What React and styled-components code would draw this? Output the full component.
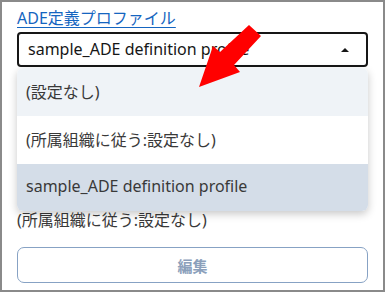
import React, { useState } from 'react';
import styled, { createGlobalStyle } from 'styled-components';

const GlobalStyle = createGlobalStyle`
  html, body {
    margin: 0;
    padding: 0;
    background: #ffffff;
  }
  body {
    font-family: "Noto Sans", "Noto Sans CJK JP", sans-serif;
  }
`;

// Outer frame of the panel
const Frame = styled.div`
  position: relative;
  width: 385px;
  height: 292px;
  box-sizing: border-box;
  border: 2px solid #8a8a8a;
  padding: 5px 15px 0 15px;
  background: #fff;
  display: flex;
  flex-direction: column;
`;

const FieldLabel = styled.a`
  align-self: flex-start;
  font-size: 16px;
  line-height: 22px;
  color: #1565c0;
  text-decoration: underline;
  text-underline-offset: 3px;
  cursor: pointer;
`;

const SelectWrap = styled.div`
  position: relative;
  margin-top: 3px;
`;

const SelectBox = styled.div`
  height: 35px;
  box-sizing: border-box;
  border: 2px solid #161616;
  border-radius: 4px;
  display: flex;
  align-items: center;
  justify-content: space-between;
  padding: 0 17px 1px 9px;
  font-size: 16px;
  color: #161616;
  background: #fff;
`;

const Caret = styled.span`
  width: 0;
  height: 0;
  border-left: 4.5px solid transparent;
  border-right: 4.5px solid transparent;
  border-bottom: 4.5px solid #161616;
  margin-top: 2px;
`;

const Menu = styled.ul`
  position: absolute;
  top: 100%;
  left: 0;
  right: 0;
  margin: 1px 0 0;
  padding: 0;
  list-style: none;
  background: #fff;
  border-radius: 6px;
  overflow: hidden;
  box-shadow: 0 3px 8px rgba(0, 0, 0, 0.22);
  z-index: 2;
`;

const MenuItem = styled.li`
  height: ${(p) => (p.$last ? 47 : 48)}px;
  box-sizing: border-box;
  display: flex;
  align-items: center;
  padding: 0 9px 3px;
  font-size: 16px;
  color: #393939;
  background: ${(p) => (p.$selected ? '#d4dde8' : p.$hover ? '#eff3f7' : '#fff')};
`;

const Helper = styled.div`
  margin-top: 143px;
  font-size: 16px;
  line-height: 20px;
  color: #393939;
`;

const EditButton = styled.button`
  margin-top: 17px;
  height: 36px;
  width: 100%;
  box-sizing: border-box;
  border: 1px solid #87a2c4;
  border-radius: 7px;
  background: #fff;
  color: #8ba0bb;
  font-family: "Noto Sans CJK JP", sans-serif;
  font-weight: 700;
  font-size: 15px;
  cursor: default;
`;

const Pointer = styled.svg`
  position: absolute;
  left: 0;
  top: 0;
  pointer-events: none;
  z-index: 5;
`;

const options = [
  '(設定なし)',
  '(所属組織に従う:設定なし)',
  'sample_ADE definition profile',
];

const App = () => {
  const [selected] = useState(2);

  return (
    <>
      <GlobalStyle />
      <Frame>
        <FieldLabel>ADE定義プロファイル</FieldLabel>
        <SelectWrap>
          <SelectBox>
            <span>{options[selected]}</span>
            <Caret />
          </SelectBox>
          <Menu>
            {options.map((o, i) => (
              <MenuItem
                key={o}
                $hover={i === 0}
                $selected={i === selected}
                $last={i === options.length - 1}
              >
                {o}
              </MenuItem>
            ))}
          </Menu>
        </SelectWrap>
        <Helper>(所属組織に従う:設定なし)</Helper>
        <EditButton>編集</EditButton>
        <Pointer width="385" height="292" viewBox="0 0 385 292">
          <polygon
            points="197,85 238,70 232,63 259,34 247,23 218,50 211,44"
            fill="#ff0000"
          />
        </Pointer>
      </Frame>
    </>
  );
};

export default App;
